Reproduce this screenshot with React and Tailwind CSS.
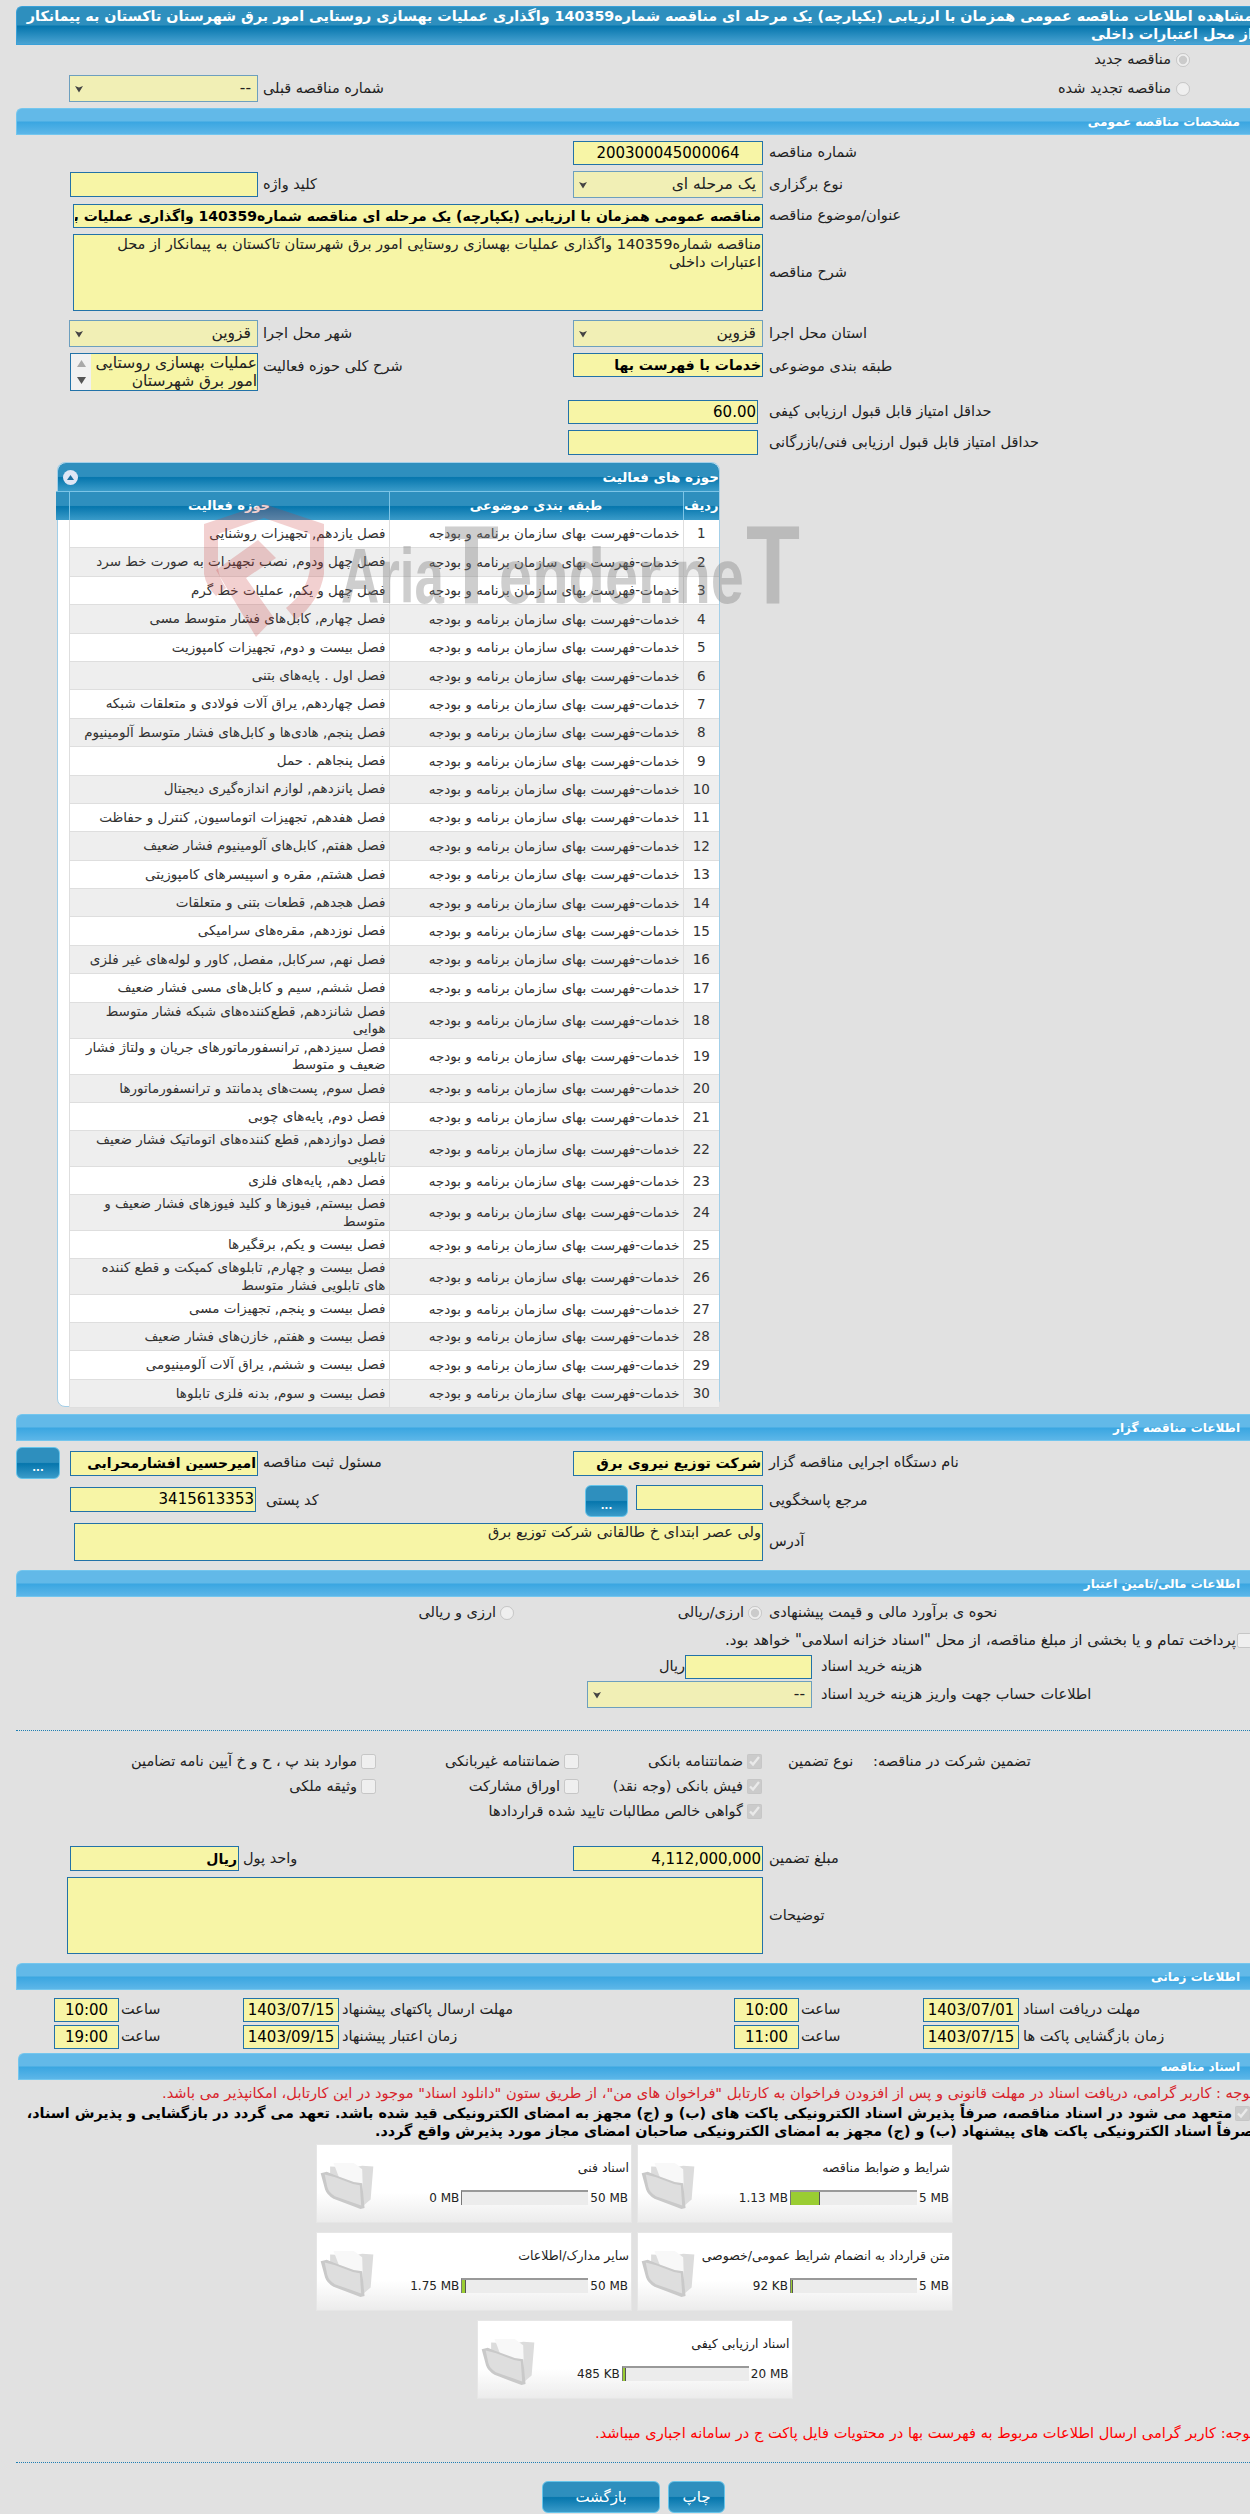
import React from 'react';

const activities = [
  ['فصل یازدهم, تجهیزات روشنایی'],
  ['فصل چهل ودوم, نصب تجهیزات به صورت خط سرد'],
  ['فصل چهل و یکم, عملیات خط گرم'],
  ['فصل چهارم, کابل‌های فشار متوسط مسی'],
  ['فصل بیست و دوم, تجهیزات کامپوزیت'],
  ['فصل اول . پایه‌های بتنی'],
  ['فصل چهاردهم, یراق آلات فولادی و متعلقات شبکه'],
  ['فصل پنجم, هادی‌ها و کابل‌های فشار متوسط آلومینیوم'],
  ['فصل پنجاهم . حمل'],
  ['فصل پانزدهم, لوازم اندازه‌گیری دیجیتال'],
  ['فصل هفدهم, تجهیزات اتوماسیون, کنترل و حفاظت'],
  ['فصل هفتم, کابل‌های آلومینیوم فشار ضعیف'],
  ['فصل هشتم, مقره و اسپیسرهای کامپوزیتی'],
  ['فصل هجدهم, قطعات بتنی و متعلقات'],
  ['فصل نوزدهم, مقره‌های سرامیکی'],
  ['فصل نهم, سرکابل, مفصل, کاور و لوله‌های غیر فلزی'],
  ['فصل ششم, سیم و کابل‌های مسی فشار ضعیف'],
  ['فصل شانزدهم, قطع‌کننده‌های شبکه فشار متوسط هوایی', 'h-[35.3px]'],
  ['فصل سیزدهم, ترانسفورماتورهای جریان و ولتاژ فشار ضعیف و متوسط', 'h-[35px]'],
  ['فصل سوم, پست‌های پدمانتد و ترانسفورماتورها'],
  ['فصل دوم, پایه‌های چوبی'],
  ['فصل دوازدهم, قطع کننده‌های اتوماتیک فشار ضعیف تابلویی', 'h-[35.4px]'],
  ['فصل دهم, پایه‌های فلزی', 'h-[27.6px]'],
  ['فصل بیستم, فیوزها و کلید فیوزهای فشار ضعیف و متوسط', 'h-[35.4px]'],
  ['فصل بیست و یکم, برقگیرها'],
  ['فصل بیست و چهارم, تابلوهای کمپکت و قطع کننده های تابلویی فشار متوسط', 'h-[35.5px]'],
  ['فصل بیست و پنجم, تجهیزات مسی', 'h-[27.5px]'],
  ['فصل بیست و هفتم, خازن‌های فشار ضعیف'],
  ['فصل بیست و ششم, یراق آلات آلومینیومی'],
  ['فصل بیست و سوم, بدنه فلزی تابلوها'],
];

const files = [
  { title: 'شرایط و ضوابط مناقصه', used: '1.13 MB', max: '5 MB', pct: 0.226 },
  { title: 'اسناد فنی', used: '0 MB', max: '50 MB', pct: 0 },
  { title: 'متن قرارداد به انضمام شرایط عمومی/خصوصی', used: '92 KB', max: '5 MB', pct: 0.018 },
  { title: 'سایر مدارک/اطلاعات', used: '1.75 MB', max: '50 MB', pct: 0.035 },
  { title: 'اسناد ارزیابی کیفی', used: '485 KB', max: '20 MB', pct: 0.024, wide: true },
];

const Section = ({ title, className = 'mr-0 ml-[16px]' }) => (
  <div className={`h-[27px] rounded-tl-[6px] border-l border-b border-t border-[#73c6ee] bg-[linear-gradient(#62b9e8_0%,#62b9e8_48%,#3aa6e1_52%,#5cb6e8_100%)] ${className}`}>
    <div className="pr-[10px] text-[12px] font-bold leading-[26px] text-white">{title}</div>
  </div>
);

const Lbl = ({ className = '', children }) => (
  <label className={`block shrink-0 text-left text-[14.5px] text-[#222] ${className}`}>{children}</label>
);

const Inp = ({ className = '', value = '', bold, align = 'text-right' }) => (
  <input
    readOnly
    value={value}
    className={`block shrink-0 border border-[#2272a8] bg-[#f7f5a6] px-[1px] text-[14px] text-black outline-none ${align} ${bold ? 'font-bold' : ''} ${className}`}
  />
);

const Sel = ({ className = '', value }) => (
  <div className={`flex h-[27px] shrink-0 items-center justify-between border border-[#6d9fbe] bg-[#f1efb5] pl-[4px] pr-[6px] text-[15.5px] text-[#222] ${className}`}>
    <span>{value}</span>
    <svg width="10" height="8" viewBox="0 0 10 8"><path d="M1 1l4 1.5L9 1 5 7.5z" fill="#444" /></svg>
  </div>
);

const Radio = ({ checked, className = '' }) => (
  <input type="radio" disabled checked={!!checked} readOnly className={`m-0 h-[14px] w-[14px] shrink-0 ${className}`} />
);

const Check = ({ checked, className = '' }) => (
  <input type="checkbox" disabled checked={!!checked} readOnly className={`m-0 h-[15px] w-[15px] shrink-0 ${className}`} />
);

const Dots = ({ className = '' }) => (
  <div className={`ml-[16px] border-t border-dotted border-[#1f7fb2] ${className}`} />
);

const BlueButton = ({ className = '', children }) => (
  <div className={`flex h-[32px] shrink-0 items-center justify-center rounded-[6px] border border-[#66c4ea] bg-[linear-gradient(#2e8fbe_0%,#2e8fbe_48%,#0676ad_52%,#3a9bc9_100%)] text-white ${className}`}>
    {children}
  </div>
);

const Folder = () => (
  <svg width="54" height="48" viewBox="0 0 160 140" className="mt-[17px] shrink-0">
    <path d="M30 12 L100 15 L125 10 L158 12 L150 110 L120 135 L30 60 Z" fill="#dcdcdc" />
    <path d="M40 2 L100 2 L125 20 L128 120 L70 80 Z" fill="#f8f8f8" />
    <path d="M2 32 L20 28 L45 38 L100 58 L125 62 L132 135 L120 138 L40 108 Q20 95 15 80 Z" fill="#c9c9c9" />
    <path d="M14 36 L45 44 L98 64 L118 68 L122 128 L44 100 Q26 90 22 74 Z" fill="#dedede" />
  </svg>
);

const FileCard = ({ file }) => (
  <div className={`flex h-[79px] w-[316px] justify-between border border-[#e6e6e6] bg-[linear-gradient(#ffffff_0%,#ffffff_62%,#ececec_100%)] pl-[3px] pr-[2px] ${file.wide ? 'col-span-2 justify-self-center' : ''}`}>
    <div className="flex flex-col">
      <div className="mt-[14px] whitespace-nowrap text-[12.5px] leading-[18px] text-[#222]">{file.title}</div>
      <div className="mt-[13px] flex h-[15px] items-center text-[12px] text-[#222]">
        <span dir="ltr" className="mr-[1px]">{file.max}</span>
        <div dir="ltr" className="mr-[2px] h-[15px] w-[127px] border-l border-t-2 border-l-[#777] border-t-[#999] bg-[#ececec]">
          {file.pct > 0 && (
            <div className="h-full border-r border-r-[#555] bg-[#9acd32]" style={{ width: Math.max(2, Math.round(file.pct * 127)) }} />
          )}
        </div>
        <span dir="ltr" className="mr-[2px]">{file.used}</span>
      </div>
    </div>
    <Folder />
  </div>
);

// site logo lying across the table
const Watermark = () => (
  <div dir="ltr" className="pointer-events-none absolute left-[144px] top-[37px] h-[140px] w-[610px]">
    <svg width="610" height="140" viewBox="0 0 610 140" fontFamily="'Liberation Sans', sans-serif" fontWeight="700" fill="#777" fillOpacity="0.36">
      <path d="M2 24 L62 4 L122 24 L122 74 Q118 100 94 120 L84 108 Q106 90 108 68 L108 34 L62 18 L16 34 L16 68 Q17 78 24 88 L14 96 Q4 86 2 74 Z" fill="#c83c3c" fillOpacity="0.24" />
      <path d="M56 40 L74 58 L44 78 L72 118 L54 137 L14 70 Z" fill="#c83c3c" fillOpacity="0.24" />
      <text x="139" y="103" textLength="103" lengthAdjust="spacingAndGlyphs" fontSize="78">Aria</text>
      <text x="242" y="103" textLength="55" lengthAdjust="spacingAndGlyphs" fontSize="112">T</text>
      <text x="297" y="103" textLength="245" lengthAdjust="spacingAndGlyphs" fontSize="78">ender.ne</text>
      <text x="544" y="103" textLength="54" lengthAdjust="spacingAndGlyphs" fontSize="112">T</text>
    </svg>
  </div>
);

const ActivityTable = () => (
  <div className="relative mt-[7px] ml-auto mr-[530px] h-[945px] w-[663px] rounded-[8px] border border-[#a3cfe8] bg-white">
    <div className="flex h-[28px] items-center justify-between rounded-t-[8px] bg-[linear-gradient(#2e8fbe_0%,#2e8fbe_48%,#0676ad_52%,#3a9bc9_100%)] pl-[5px] pr-0">
      <span className="text-[13.5px] font-bold text-white">حوزه های فعالیت</span>
      <span className="flex h-[15px] w-[15px] items-center justify-center rounded-full bg-[#dfe6f5]">
        <svg width="9" height="7" viewBox="0 0 9 7"><path d="M4.5 1L8 6H1z" fill="#1e6fa0" /></svg>
      </span>
    </div>
    <table className="w-full table-fixed border-collapse text-[13.5px] text-[#333]">
      <colgroup>
        <col className="w-[36px]" />
        <col className="w-[294px]" />
        <col className="w-[320px]" />
        <col className="w-[13px]" />
      </colgroup>
      <thead>
        <tr className="h-[28px] bg-[linear-gradient(#2e8fbe_0%,#2e8fbe_48%,#0676ad_52%,#3a9bc9_100%)] text-[13px] font-bold text-white">
          <th className="border-t border-l border-[#7cc4e6] font-bold">ردیف</th>
          <th className="border-t border-l border-[#7cc4e6] font-bold">طبقه بندی موضوعی</th>
          <th className="border-t border-l border-[#7cc4e6] font-bold">حوزه فعالیت</th>
          <th className="border-t border-[#7cc4e6]" />
        </tr>
      </thead>
      <tbody>
        {activities.map(([name, height], i) => {
          const cell = `border-b border-l border-[#dedede] ${i % 2 ? 'bg-[#eeeeee]' : 'bg-white'}`;
          return (
            <tr key={i} className={height || 'h-[28.4px]'}>
              <td className={`${cell} text-center`}>{i + 1}</td>
              <td className={`${cell} pr-[3px] text-right`}>خدمات-فهرست بهای سازمان برنامه و بودجه</td>
              <td className={`${cell} pr-[3px] pl-[6px] text-right leading-[17.5px]`}>{name}</td>
              <td />
            </tr>
          );
        })}
      </tbody>
    </table>
    <Watermark />
  </div>
);

export default function App() {
  return (
    <div dir="rtl" className="h-[2514px] w-[1250px] overflow-hidden bg-[#e1e1e1] pt-[6px] font-['DejaVu_Sans',sans-serif] text-[14.5px] text-[#222]">
      {/* page title */}
      <div className="ml-[16px] h-[39px] rounded-tl-[6px] border-l border-t border-b border-[#3aa0d8] bg-[linear-gradient(#2e8fbe_0%,#2e8fbe_48%,#0676ad_52%,#4aa3d2_100%)]">
        <div className="mr-[-3px] whitespace-nowrap text-[14.3px] font-bold leading-[18px] text-white">
          مشاهده اطلاعات مناقصه عمومی همزمان با ارزیابی (یکپارچه) یک مرحله ای مناقصه شماره140359 واگذاری عملیات بهسازی روستایی امور برق شهرستان تاکستان به پیمانکار
          <br />
          از محل اعتبارات داخلی
        </div>
      </div>

      <div className="flex h-[30px] items-center pr-[60px]">
        <Radio checked />
        <span className="mr-[5px]">مناقصه جدید</span>
      </div>
      <div className="flex h-[27px] items-center">
        <div className="flex w-[677px] shrink-0 items-center pr-[60px]">
          <Radio />
          <span className="mr-[5px]">مناقصه تجدید شده</span>
        </div>
        <Lbl className="w-[310px]">شماره مناقصه قبلی</Lbl>
        <Sel className="mr-[5px] w-[189px]" value="--" />
      </div>

      <Section title="مشخصات مناقصه عمومی" className="mt-[6px] ml-[16px]" />

      <div className="mt-[6px] flex items-center">
        <Lbl className="w-[481px]">شماره مناقصه</Lbl>
        <Inp className="mr-[6px] h-[24px] w-[190px] text-[15px]" align="text-center" value="200300045000064" />
      </div>
      <div className="mt-[6px] flex items-center">
        <Lbl className="w-[481px]">نوع برگزاری</Lbl>
        <Sel className="mr-[6px] w-[190px]" value="یک مرحله ای" />
        <Lbl className="w-[310px]">کلید واژه</Lbl>
        <Inp className="mr-[5px] h-[25px] w-[188px]" />
      </div>
      <div className="mt-[6px] flex items-center">
        <Lbl className="w-[481px]">عنوان/موضوع مناقصه</Lbl>
        <Inp bold className="mr-[6px] h-[24px] w-[690px]" value="مناقصه عمومی همزمان با ارزیابی (یکپارچه) یک مرحله ای مناقصه شماره140359 واگذاری عملیات بهسازی روستایی امور برق شهرستان تاکستان به پیمانکار از محل اعتبارات داخلی" />
      </div>
      <div className="mt-[6px] flex items-center">
        <Lbl className="w-[481px]">شرح مناقصه</Lbl>
        <textarea
          readOnly
          value="مناقصه شماره140359 واگذاری عملیات بهسازی روستایی امور برق شهرستان تاکستان به پیمانکار از محل اعتبارات داخلی"
          className="mr-[6px] block h-[77px] w-[690px] shrink-0 resize-none border border-[#2272a8] bg-[#f7f5a6] px-[1px] text-[14.6px] leading-[18px] text-[#222] outline-none"
        />
      </div>
      <div className="mt-[9px] flex items-center">
        <Lbl className="w-[481px]">استان محل اجرا</Lbl>
        <Sel className="mr-[6px] w-[190px]" value="قزوین" />
        <Lbl className="w-[310px]">شهر محل اجرا</Lbl>
        <Sel className="mr-[5px] w-[189px]" value="قزوین" />
      </div>
      <div className="mt-[6px] flex h-[38px] items-start">
        <Lbl className="mt-[3px] w-[481px]">طبقه بندی موضوعی</Lbl>
        <Inp bold className="mr-[6px] h-[24px] w-[190px]" value="خدمات با فهرست بها" />
        <Lbl className="mt-[3px] w-[310px]">شرح کلی حوزه فعالیت</Lbl>
        <div className="mr-[5px] flex h-[38px] w-[188px] shrink-0 border border-[#2272a8] bg-[#f7f5a6] text-[15.5px] leading-[18px] text-[#222]">
          <div className="flex-1 overflow-hidden">عملیات بهسازی روستایی امور برق شهرستان</div>
          <div className="flex w-[20px] shrink-0 flex-col items-center justify-between bg-[#f1f1f1] py-[6px]">
            <svg width="9" height="7" viewBox="0 0 9 7"><path d="M4.5 0L9 7H0z" fill="#a9a9a9" /></svg>
            <svg width="9" height="7" viewBox="0 0 9 7"><path d="M0 0h9L4.5 7z" fill="#555" /></svg>
          </div>
        </div>
      </div>
      <div className="mt-[9px] flex items-center">
        <Lbl className="w-[481px]">حداقل امتیاز قابل قبول ارزیابی کیفی</Lbl>
        <Inp className="mr-[11px] h-[24px] w-[190px] text-[15px]" value="60.00" />
      </div>
      <div className="mt-[6px] flex items-center">
        <Lbl className="w-[481px]">حداقل امتیاز قابل قبول ارزیابی فنی/بازرگانی</Lbl>
        <Inp className="mr-[11px] h-[25px] w-[190px]" />
      </div>

      <ActivityTable />

      <Section title="اطلاعات مناقصه گزار" className="mt-[7px] ml-[16px]" />
      <div className="mt-[6px] flex h-[32px] items-center">
        <Lbl className="w-[481px]">نام دستگاه اجرایی مناقصه گزار</Lbl>
        <Inp bold className="mr-[6px] h-[25px] w-[190px]" value="شرکت توزیع نیروی برق" />
        <Lbl className="w-[310px]">مسئول ثبت مناقصه</Lbl>
        <Inp bold className="mr-[5px] h-[25px] w-[188px]" value="امیرحسین افشارمحرابی" />
        <BlueButton className="mr-[10px] w-[44px] pt-[8px] text-[10px] font-bold">...</BlueButton>
      </div>
      <div className="mt-[6px] flex h-[32px] items-center">
        <Lbl className="w-[481px]">مرجع پاسخگویی</Lbl>
        <Inp className="mr-[6px] h-[25px] w-[127px] self-start" />
        <BlueButton className="mr-[8px] w-[43px] pt-[8px] text-[10px] font-bold">...</BlueButton>
        <Lbl className="w-[319px]">کد پستی</Lbl>
        <Inp className="mr-[10px] mb-[4px] h-[25px] w-[186px] text-[15px]" value="3415613353" />
      </div>
      <div className="mt-[6px] flex items-center">
        <Lbl className="w-[481px]">آدرس</Lbl>
        <textarea
          readOnly
          value="ولی عصر ابتدای خ طالقانی شرکت توزیع برق"
          className="mr-[6px] block h-[38px] w-[689px] shrink-0 resize-none border border-[#2272a8] bg-[#f7f5a6] px-[1px] text-[14.5px] leading-[16px] text-[#222] outline-none"
        />
      </div>

      <Section title="اطلاعات مالی/تامین اعتبار" className="mt-[9px] ml-[16px]" />
      <div className="mt-[3px] flex h-[26px] items-center">
        <Lbl className="w-[481px]">نحوه ی برآورد مالی و قیمت پیشنهادی</Lbl>
        <div className="flex w-[249px] shrink-0 items-center pr-[7px]">
          <Radio checked />
          <span className="mr-[4px]">ارزی/ریالی</span>
        </div>
        <div className="mr-[6px] flex items-center">
          <Radio />
          <span className="mr-[4px]">ارزی و ریالی</span>
        </div>
      </div>
      <div className="mt-[3px] mr-[-2px] flex h-[22px] items-center">
        <Check />
        <span className="mr-[1px] text-[15px]">پرداخت تمام و یا بخشی از مبلغ مناقصه، از محل "اسناد خزانه اسلامی" خواهد بود.</span>
      </div>
      <div className="mt-[4px] flex items-center">
        <Lbl className="w-[429px]">هزینه خرید اسناد</Lbl>
        <Inp className="mr-[9px] h-[24px] w-[127px]" />
        <span>ریال</span>
      </div>
      <div className="mt-[2px] flex items-center">
        <Lbl className="w-[429px]">اطلاعات حساب جهت واریز هزینه خرید اسناد</Lbl>
        <Sel className="mr-[9px] w-[225px]" value="--" />
      </div>

      <Dots className="mt-[22px]" />

      <div className="mt-[18px] flex">
        <Lbl className="h-[25px] w-[377px] leading-[25px]">تضمین شرکت در مناقصه:</Lbl>
        <Lbl className="h-[25px] w-[85px] leading-[25px]">نوع تضمین</Lbl>
        <div className="grid grid-cols-[188px_200px_auto] grid-rows-[25px_25px_25px] items-center">
          <div className="flex items-center pr-[26px]"><Check checked /><span className="mr-[4px]">ضمانتنامه بانکی</span></div>
          <div className="flex items-center pr-[21px]"><Check /><span className="mr-[4px]">ضمانتنامه غیربانکی</span></div>
          <div className="flex items-center pr-[24px]"><Check /><span className="mr-[4px]">موارد بند پ ، ح و خ آیین نامه تضامین</span></div>
          <div className="flex items-center pr-[26px]"><Check checked /><span className="mr-[4px]">فیش بانکی (وجه نقد)</span></div>
          <div className="flex items-center pr-[21px]"><Check /><span className="mr-[4px]">اوراق مشارکت</span></div>
          <div className="flex items-center pr-[24px]"><Check /><span className="mr-[4px]">وثیقه ملکی</span></div>
          <div className="col-span-3 flex items-center pr-[26px]"><Check checked /><span className="mr-[4px]">گواهی خالص مطالبات تایید شده قراردادها</span></div>
        </div>
      </div>

      <div className="mt-[22px] flex items-center">
        <Lbl className="w-[481px]">مبلغ تضمین</Lbl>
        <Inp className="mr-[6px] h-[25px] w-[190px] text-[15px]" value="4,112,000,000" />
        <Lbl className="w-[330px]">واحد پول</Lbl>
        <Inp bold className="mr-[4px] h-[25px] w-[169px]" value="ریال" />
      </div>
      <div className="mt-[6px] flex items-center">
        <Lbl className="w-[481px]">توضیحات</Lbl>
        <textarea readOnly value="" className="mr-[6px] block h-[77px] w-[696px] shrink-0 resize-none border border-[#2272a8] bg-[#f7f5a6] outline-none" />
      </div>

      <Section title="اطلاعات زمانی" className="mt-[9px] ml-[16px]" />
      <div className="mt-[8px] flex items-center">
        <Lbl className="w-[227px]">مهلت دریافت اسناد</Lbl>
        <Inp className="mr-[4px] h-[24px] w-[96px] text-[15px]" align="text-center" value="1403/07/01" />
        <Lbl className="w-[122px]">ساعت</Lbl>
        <Inp className="mr-[2px] h-[24px] w-[65px] text-[15px]" align="text-center" value="10:00" />
        <Lbl className="w-[392px]">مهلت ارسال پاکتهای پیشنهاد</Lbl>
        <Inp className="mr-[3px] h-[24px] w-[96px] text-[15px]" align="text-center" value="1403/07/15" />
        <Lbl className="w-[122px]">ساعت</Lbl>
        <Inp className="mr-[2px] h-[24px] w-[65px] text-[15px]" align="text-center" value="10:00" />
      </div>
      <div className="mt-[3px] flex items-center">
        <Lbl className="w-[227px]">زمان بازگشایی پاکت ها</Lbl>
        <Inp className="mr-[4px] h-[24px] w-[96px] text-[15px]" align="text-center" value="1403/07/15" />
        <Lbl className="w-[122px]">ساعت</Lbl>
        <Inp className="mr-[2px] h-[24px] w-[65px] text-[15px]" align="text-center" value="11:00" />
        <Lbl className="w-[392px]">زمان اعتبار پیشنهاد</Lbl>
        <Inp className="mr-[3px] h-[24px] w-[96px] text-[15px]" align="text-center" value="1403/09/15" />
        <Lbl className="w-[122px]">ساعت</Lbl>
        <Inp className="mr-[2px] h-[24px] w-[65px] text-[15px]" align="text-center" value="19:00" />
      </div>

      <Section title="اسناد مناقصه" className="mt-[4px] ml-[18px]" />
      <div className="mt-[4px] mr-[-4px] h-[18px] whitespace-nowrap text-[14.6px] leading-[18px] text-[#d8232a]">
        توجه : کاربر گرامی، دریافت اسناد در مهلت قانونی و پس از افزودن فراخوان به کارتابل "فراخوان های من"، از طریق ستون "دانلود اسناد" موجود در این کارتابل، امکانپذیر می باشد.
      </div>
      <div className="mt-[2px] text-[14.3px] font-bold leading-[18px] text-black">
        <div className="flex h-[18px] items-center whitespace-nowrap">
          <Check checked />
          <span className="mr-[3px]">متعهد می شود در اسناد مناقصه، صرفاً پذیرش اسناد الکترونیکی پاکت های (ب) و (ج) مجهز به امضای الکترونیکی قید شده باشد. تعهد می گردد در بازگشایی و پذیرش اسناد،</span>
        </div>
        <div className="mr-[-4px] h-[18px] whitespace-nowrap">صرفاً اسناد الکترونیکی پاکت های پیشنهاد (ب) و (ج) مجهز به امضای الکترونیکی صاحبان امضای مجاز مورد پذیرش واقع گردد.</div>
      </div>

      <div className="mt-[4px] mr-[297px] grid w-[637px] grid-cols-2 gap-x-[5px] gap-y-[9px]">
        {files.map((f) => <FileCard key={f.title} file={f} />)}
      </div>

      <div className="mt-[25px] mr-[-4px] h-[18px] whitespace-nowrap text-[14.6px] leading-[18px] text-[#f00]">
        توجه: کاربر گرامی ارسال اطلاعات مربوط به فهرست بها در محتویات فایل پاکت ج در سامانه اجباری میباشد.
      </div>

      <Dots className="mt-[20px]" />

      <div className="mt-[18px] mr-[525px] flex gap-[8px] text-[15px]">
        <BlueButton className="w-[57px]">چاپ</BlueButton>
        <BlueButton className="w-[118px]">بازگشت</BlueButton>
      </div>
    </div>
  );
}
